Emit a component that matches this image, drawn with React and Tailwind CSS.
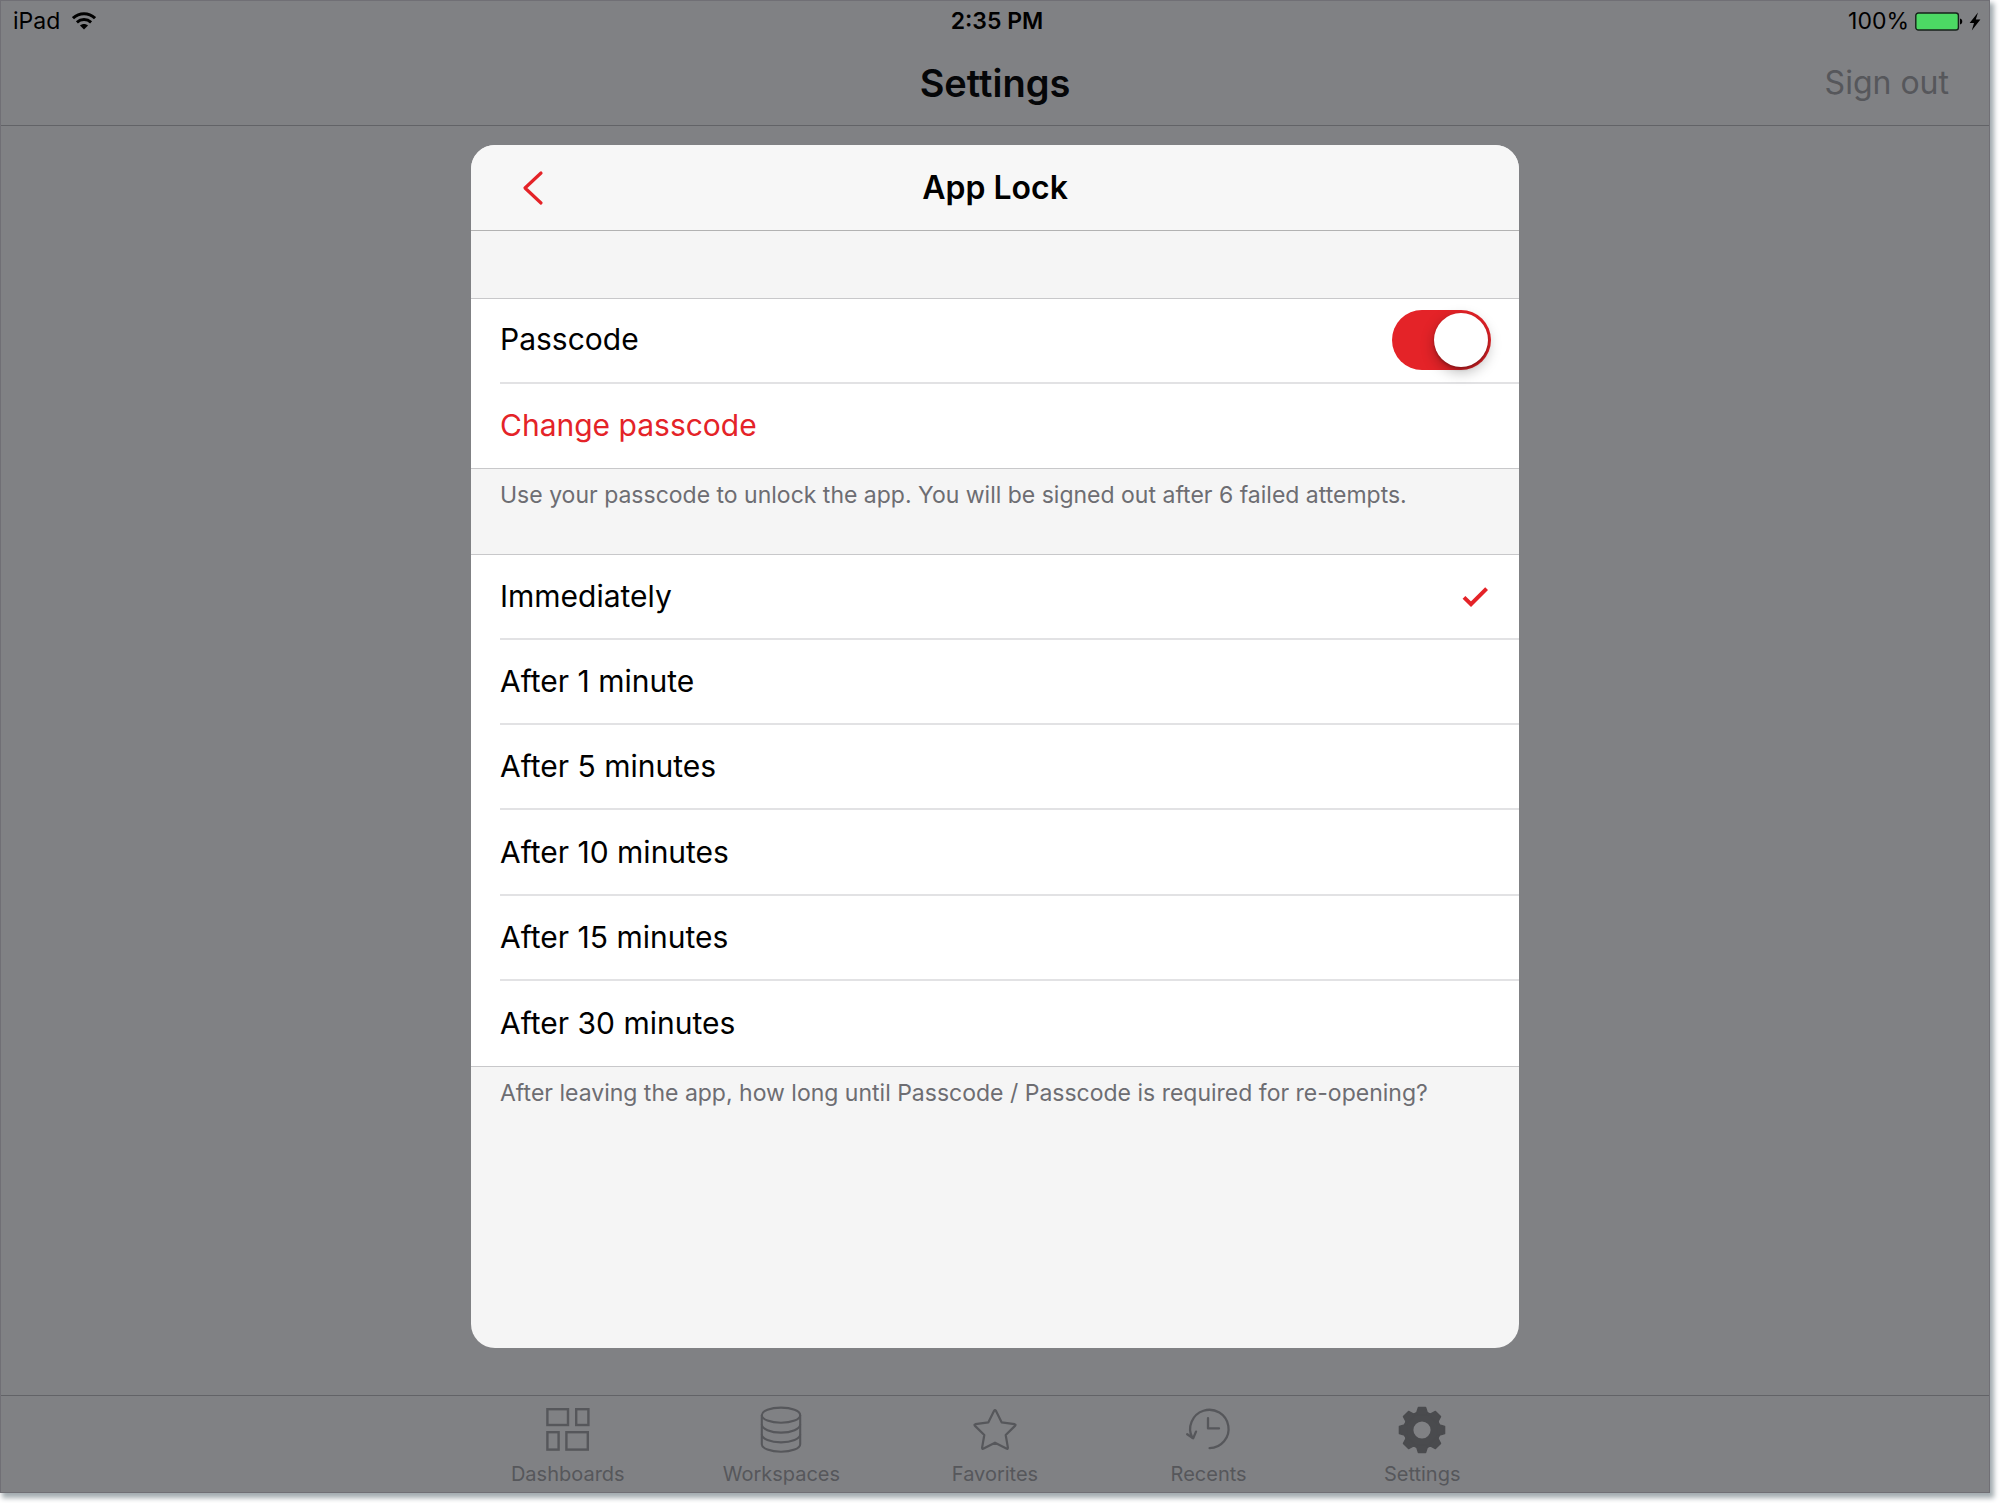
import { useState } from "react";

const DELAYS = [
  "Immediately",
  "After 1 minute",
  "After 5 minutes",
  "After 10 minutes",
  "After 15 minutes",
  "After 30 minutes",
];

function WifiIcon() {
  return (
    <svg width="24" height="18" viewBox="0 0 24 18" fill="none" stroke="#000" strokeWidth="3" aria-hidden="true">
      <path d="M1 6.2C7.4 0.2 16.6 0.2 23 6.2" />
      <path d="M4.9 10.3C9 6.7 15 6.7 19.1 10.3" />
      <path d="M12 17.6L8 13.6C10.4 11.6 13.6 11.6 16 13.6Z" fill="#000" stroke="none" />
    </svg>
  );
}

function BatteryIcon() {
  return (
    <svg width="48" height="19" viewBox="0 0 48 19" aria-hidden="true">
      <rect x="0.8" y="1" width="42.6" height="17" rx="2.6" fill="#4cd964" stroke="#16201a" strokeWidth="1.4" />
      <path d="M45 6.5C48 7 48 12 45 12.5Z" fill="#000" />
    </svg>
  );
}

function BoltIcon() {
  return (
    <svg width="12" height="19" viewBox="0 0 12 19" aria-hidden="true">
      <path d="M9 0.5L0.6 11H5L2.8 18.5L11.4 7.6H6.8Z" fill="#000" />
    </svg>
  );
}

function DashboardsIcon() {
  return (
    <svg width="48" height="50" viewBox="0 0 48 50" fill="none" stroke="currentColor" strokeWidth="2.4">
      <rect x="3.4" y="5.2" width="20.6" height="15.8" />
      <rect x="32.2" y="5.2" width="12.2" height="15.8" />
      <rect x="3.4" y="28.2" width="11.2" height="17.4" />
      <rect x="22.4" y="28.2" width="21.4" height="17.4" />
    </svg>
  );
}

function WorkspacesIcon() {
  return (
    <svg width="48" height="50" viewBox="0 0 48 50" fill="none" stroke="currentColor" strokeWidth="2.1">
      <ellipse cx="24" cy="11.2" rx="19.2" ry="7.6" />
      <path d="M4.8 11.2V40.2C4.8 44.4 13.4 47.8 24 47.8S43.2 44.4 43.2 40.2V11.2" />
      <path d="M4.8 20.6C4.8 24.8 13.4 28.6 24 28.6S43.2 24.8 43.2 20.6" />
      <path d="M4.8 30.6C4.8 34.8 13.4 38.4 24 38.4S43.2 34.8 43.2 30.6" />
    </svg>
  );
}

function FavoritesIcon() {
  return (
    <svg width="48" height="50" viewBox="0 0 48 50" fill="none" stroke="currentColor" strokeWidth="2.2" strokeLinejoin="round">
      <path d="M23.1 6.8Q24 5.2 24.9 6.8L30.6 18.3L43.6 20.2Q45.3 20.6 44 21.9L34.7 31L36.9 43.6Q37 45.4 35.4 44.6L24 38.7L12.6 44.6Q11 45.4 11.1 43.6L13.3 31L4 21.9Q2.7 20.6 4.4 20.2L17.4 18.3Z" />
    </svg>
  );
}

function RecentsIcon() {
  return (
    <svg width="48" height="50" viewBox="0 0 48 50" fill="none" stroke="currentColor" strokeWidth="2.3" strokeLinecap="round" strokeLinejoin="round">
      <path d="M24.6 44.2A19.2 19.2 0 1 0 7.2 33.6" />
      <path d="M2.2 30.2L8.2 34.2L11 27.6" />
      <path d="M23 14.2V24.4H34" />
    </svg>
  );
}

function GearIcon() {
  const teeth = [0, 45, 90, 135, 180, 225, 270, 315];
  return (
    <svg width="48" height="50" viewBox="0 0 48 50" fill="#4a4b4e" stroke="#4a4b4e">
      <circle cx="24" cy="26" r="13.6" fill="none" strokeWidth="10" />
      {teeth.map((a) => (
        <path
          key={a}
          d="M20.4 3.4H27.6L29.2 8.4L32 11H16L18.8 8.4Z"
          strokeWidth="1.4"
          strokeLinejoin="round"
          transform={`rotate(${a} 24 26)`}
        />
      ))}
    </svg>
  );
}

const TABS = [
  { label: "Dashboards", Icon: DashboardsIcon },
  { label: "Workspaces", Icon: WorkspacesIcon },
  { label: "Favorites", Icon: FavoritesIcon },
  { label: "Recents", Icon: RecentsIcon },
  { label: "Settings", Icon: GearIcon, active: true },
];

export default function App() {
  const [enabled, setEnabled] = useState(true);
  const [delay, setDelay] = useState("Immediately");

  return (
    <div className="flex min-h-screen flex-col bg-white pr-2.5 pb-2.5 font-['Inter',sans-serif] text-black">
      <div className="flex flex-1 flex-col border border-[#706f75] bg-[#808184] shadow-[3px_4px_5px_1px_#a3acb0]">
        <header className="border-b border-[#626367]">
          <div className="grid grid-cols-3 items-center pt-1 pr-2 pl-3 text-[23px] leading-8">
            <div className="flex items-center gap-3">
              <span>iPad</span>
              <WifiIcon />
            </div>
            <div className="text-center font-semibold">2:35 PM</div>
            <div className="flex items-center justify-end gap-1.5">
              <span>100%</span>
              <BatteryIcon />
              <BoltIcon />
            </div>
          </div>
          <div className="grid grid-cols-3 items-center px-10 pt-[22px] pb-[18px]">
            <span />
            <h1 className="text-center text-[38px] leading-12 font-semibold text-[#050608]">Settings</h1>
            <button type="button" className="justify-self-end text-[32px] leading-12 text-[#56575b]">
              Sign out
            </button>
          </div>
        </header>

        <main className="flex flex-1 justify-center pt-[19px] pb-[47px]">
          <section className="flex w-full max-w-[1048px] flex-col overflow-hidden rounded-3xl bg-[#f5f5f5]" aria-labelledby="lock-title">
            <div className="grid h-[86px] grid-cols-3 items-center border-b border-[#b2b2b2] bg-[#f7f7f7]">
              <button type="button" aria-label="Back" className="ml-[50px] justify-self-start text-[#e42328]">
                <svg width="24" height="36" viewBox="0 0 24 36" fill="none" stroke="currentColor" strokeWidth="3.2" strokeLinecap="round" strokeLinejoin="round">
                  <path d="M20 3L4 18L20 33" />
                </svg>
              </button>
              <h2 id="lock-title" className="text-center text-[32px] leading-10 font-semibold">
                App Lock
              </h2>
            </div>

            <div className="mt-[67px] border-y border-[#c8c8ca] bg-white pl-[29px]">
              <label className="flex h-[85px] items-center justify-between border-b-2 border-[#e2e2e4] pr-7 pb-0.5 text-[30px]">
                Passcode
                <input
                  type="checkbox"
                  role="switch"
                  checked={enabled}
                  onChange={(e) => setEnabled(e.target.checked)}
                  className="flex h-[60px] w-[99px] appearance-none items-center rounded-full bg-[#d8d8da] px-[3px] before:size-[54px] before:rounded-full before:bg-white before:shadow-[0_5px_14px_rgba(0,0,0,0.28),0_2px_3px_rgba(0,0,0,0.25)] checked:justify-end checked:bg-[#e42328]"
                />
              </label>
              <button type="button" className="flex h-[84px] w-full items-center pb-0.5 text-[30px] text-[#e42328]">
                Change passcode
              </button>
            </div>

            <p className="h-[85px] px-[29px] pt-2.5 text-[23px] leading-8 text-[#6d6d72]">
              Use your passcode to unlock the app. You will be signed out after 6 failed attempts.
            </p>

            <fieldset className="border-y border-[#c8c8ca] bg-white pl-[29px]" aria-label="Lock delay">
              <div className="grid h-[511px] grid-rows-6">
                {DELAYS.map((d) => (
                  <label key={d} className="flex items-center justify-between border-b-2 border-[#e2e2e4] pr-[31px] text-[30px] last:border-b-0">
                    {d}
                    <input
                      type="radio"
                      name="delay"
                      value={d}
                      checked={delay === d}
                      onChange={() => setDelay(d)}
                      className="peer size-0 appearance-none"
                    />
                    <svg className="ml-auto hidden peer-checked:block" width="26" height="22" viewBox="0 0 26 22" fill="none" stroke="#e42328" strokeWidth="4" aria-hidden="true">
                      <path d="M2 11.4L9 18.2L24.6 2.6" />
                    </svg>
                  </label>
                ))}
              </div>
            </fieldset>

            <p className="px-[29px] pt-2.5 text-[23px] leading-8 text-[#6d6d72]">
              After leaving the app, how long until Passcode / Passcode is required for re-opening?
            </p>
          </section>
        </main>

        <nav className="flex justify-center border-t border-[#626367]">
          <div className="grid w-full max-w-[1068px] grid-cols-5 pt-2 pb-1.5">
            {TABS.map(({ label, Icon, active }) => (
              <button
                key={label}
                type="button"
                aria-current={active ? "page" : undefined}
                className="flex flex-col items-center gap-2 text-[20px] leading-6 text-[#56575b]"
              >
                <Icon />
                {label}
              </button>
            ))}
          </div>
        </nav>
      </div>
    </div>
  );
}
